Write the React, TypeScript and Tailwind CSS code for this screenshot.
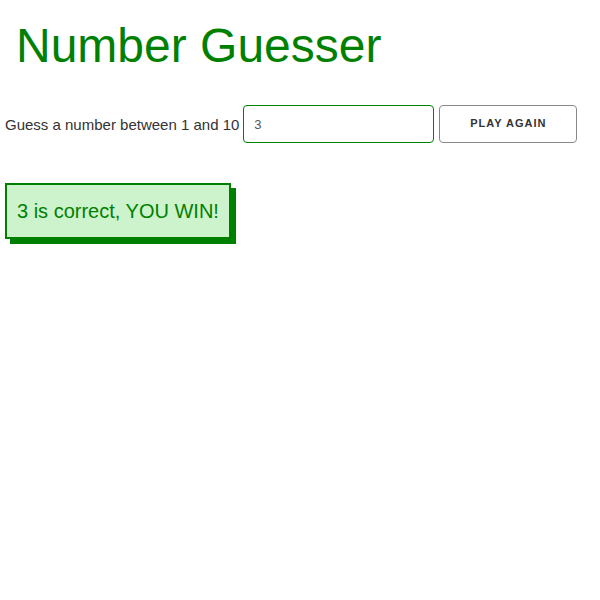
import React from "react";

export default function App() {
  return (
    <div className="min-h-[600px] bg-white font-['Liberation_Sans',Arial,sans-serif] text-[#333]">
      <h1 className="pl-[16px] pt-[18px] text-[48px] leading-[55px] font-normal text-[#008000]">
        Number Guesser
      </h1>
      <div className="mt-[32px] flex items-center pl-[5px]">
        <label className="text-[15px] leading-[17px] text-[#333]">Guess a number between 1 and 10</label>
        <input
          type="text"
          defaultValue="3"
          className="ml-[4px] h-[38px] w-[191px] rounded-[4px] border border-[#008000] pl-[10px] text-[13px] text-[#555] outline-none"
        />
        <button className="-mt-[1px] ml-[5px] h-[38px] w-[138px] rounded-[4px] border border-[#888] bg-white text-[11px] font-bold uppercase tracking-[1px] text-[#333]">
          Play Again
        </button>
      </div>
      <div className="mt-[40px] pl-[5px]">
        <div className="inline-flex h-[56px] items-center border-2 border-[#008000] bg-[#cdf3cd] px-[10px] text-[20px] leading-[23px] text-[#008000] shadow-[5px_5px_0_#008000]">
          3 is correct, YOU WIN!
        </div>
      </div>
    </div>
  );
}
